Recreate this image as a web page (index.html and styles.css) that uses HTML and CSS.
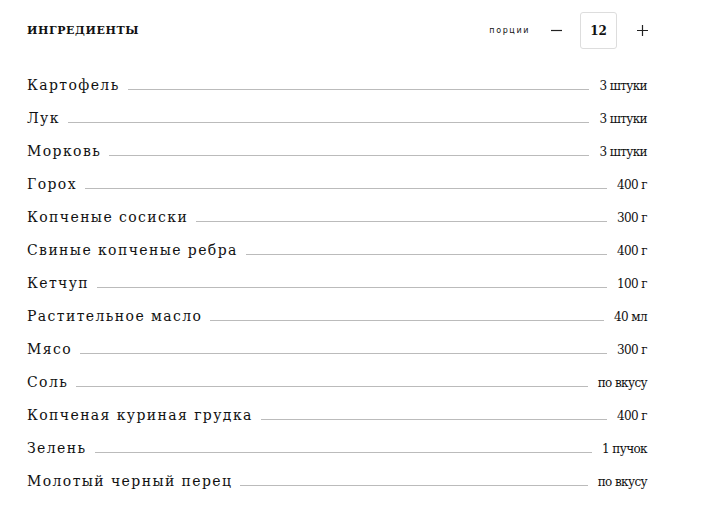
FILE: index.html
```html
<!DOCTYPE html>
<html lang="ru">
<head>
<meta charset="utf-8">
<link rel="stylesheet" href="styles.css">
</head>
<body>
<div class="wrap">
  <div class="head">
    <h2 class="title">ИНГРЕДИЕНТЫ</h2>
    <div class="portions">
      <span class="plabel">порции</span>
      <span class="btn"><svg width="11" height="11" viewBox="0 0 11 11"><path d="M0 5.5h11" stroke="#222" stroke-width="1.2"/></svg></span>
      <span class="count">12</span>
      <span class="btn"><svg width="11" height="11" viewBox="0 0 11 11"><path d="M0 5.5h11M5.5 0v11" stroke="#222" stroke-width="1.2"/></svg></span>
    </div>
  </div>
  <ul class="list">
    <li class="row"><span class="name">Картофель</span><span class="dots"></span><span class="qty">3 штуки</span></li>
    <li class="row"><span class="name">Лук</span><span class="dots"></span><span class="qty">3 штуки</span></li>
    <li class="row"><span class="name">Морковь</span><span class="dots"></span><span class="qty">3 штуки</span></li>
    <li class="row"><span class="name">Горох</span><span class="dots"></span><span class="qty">400 г</span></li>
    <li class="row"><span class="name">Копченые сосиски</span><span class="dots"></span><span class="qty">300 г</span></li>
    <li class="row"><span class="name">Свиные копченые ребра</span><span class="dots"></span><span class="qty">400 г</span></li>
    <li class="row"><span class="name">Кетчуп</span><span class="dots"></span><span class="qty">100 г</span></li>
    <li class="row"><span class="name">Растительное масло</span><span class="dots"></span><span class="qty">40 мл</span></li>
    <li class="row"><span class="name">Мясо</span><span class="dots"></span><span class="qty">300 г</span></li>
    <li class="row"><span class="name">Соль</span><span class="dots"></span><span class="qty">по вкусу</span></li>
    <li class="row"><span class="name">Копченая куриная грудка</span><span class="dots"></span><span class="qty">400 г</span></li>
    <li class="row"><span class="name">Зелень</span><span class="dots"></span><span class="qty">1 пучок</span></li>
    <li class="row"><span class="name">Молотый черный перец</span><span class="dots"></span><span class="qty">по вкусу</span></li>
  </ul>
</div>
</body>
</html>
```
FILE: styles.css
```css
html, body { margin: 0; padding: 0; background: #fff; }
body { font-family: "DejaVu Serif", serif; color: #111; }
.wrap { padding: 12px 54px 0 27px; }
.head { display: flex; align-items: center; justify-content: space-between; height: 37px; }
.title { margin: 0; font-size: 11px; font-weight: bold; letter-spacing: 0.6px; }
.portions { display: flex; align-items: center; }
.plabel { font-family: "DejaVu Sans", sans-serif; font-size: 8px; letter-spacing: 1.6px; margin-right: 21px; }
.btn { display: flex; width: 11px; height: 11px; }
.count { width: 35px; height: 35px; border: 1px solid #ddd; border-radius: 3px; display: flex; align-items: center; justify-content: center; font-weight: bold; font-size: 12px; margin: 0 20px 0 18px; }
.list { list-style: none; margin: 28px 1px 0 0; padding: 0; }
.row { display: flex; align-items: baseline; height: 33px; }
.name { font-size: 14px; letter-spacing: 1.4px; }
.dots { flex: 1; border-bottom: 1px solid #bbb; margin: 0 10px 0 8px; height: 1px; }
.qty { font-size: 12px; letter-spacing: -0.6px; }
```
